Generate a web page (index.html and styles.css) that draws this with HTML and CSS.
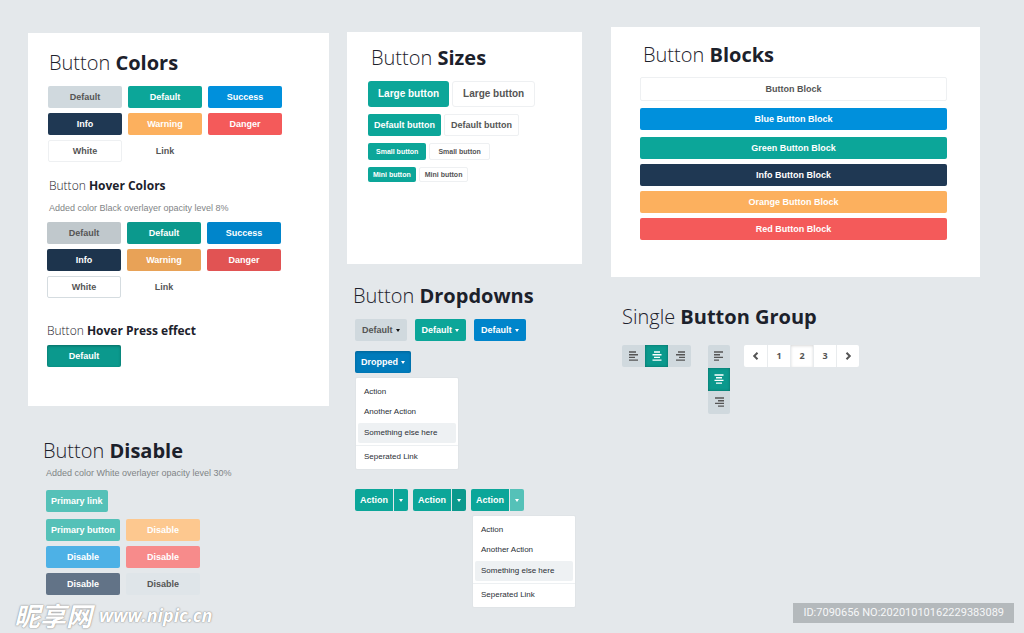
FILE: index.html
```html
<!DOCTYPE html>
<html lang="en">
<head>
<meta charset="utf-8">
<title>Buttons</title>
<link rel="stylesheet" href="styles.css">
</head>
<body>
<svg class="sprite" aria-hidden="true">
  <symbol id="left" viewBox="0 0 10 10"><path d="M0 1h7M0 3.7h9M0 6.4h6M0 9.1h9"/></symbol>
  <symbol id="center" viewBox="0 0 10 10"><path d="M2 1h6M.5 3.7h9M2 6.4h6M.5 9.1h9"/></symbol>
  <symbol id="right" viewBox="0 0 10 10"><path d="M3 1h7M1 3.7h9M4 6.4h6M1 9.1h9"/></symbol>
  <symbol id="left-alt" viewBox="0 0 10 10"><path d="M0 1h9M0 3.7h6M0 6.4h9M0 9.1h5"/></symbol>
  <symbol id="center-alt" viewBox="0 0 10 10"><path d="M.5 1h9M2 3.7h6M.5 6.4h9M2 9.1h6"/></symbol>
  <symbol id="right-alt" viewBox="0 0 10 10"><path d="M1 1h9M4 3.7h6M1 6.4h9M4 9.1h6"/></symbol>
  <symbol id="prev" viewBox="0 0 10 10"><path class="chev" d="M6.5 1.7 3.2 5l3.3 3.3"/></symbol>
  <symbol id="next" viewBox="0 0 10 10"><path class="chev" d="M3.5 1.7 6.8 5 3.5 8.3"/></symbol>
</svg>
<main class="page">
  <div class="col col-left">
    <section class="panel colors">
      <h2 class="title">Button <b>Colors</b></h2>
      <div class="swatches">
        <button class="btn default">Default</button>
        <button class="btn green">Default</button>
        <button class="btn blue">Success</button>
        <button class="btn navy">Info</button>
        <button class="btn orange">Warning</button>
        <button class="btn red">Danger</button>
        <button class="btn white">White</button>
        <a class="btn link" href="#">Link</a>
      </div>
      <h3 class="subtitle">Button <b>Hover Colors</b></h3>
      <p class="note">Added color Black overlayer opacity level 8%</p>
      <div class="swatches hovered">
        <button class="btn default-h">Default</button>
        <button class="btn green-h">Default</button>
        <button class="btn blue-h">Success</button>
        <button class="btn navy-h">Info</button>
        <button class="btn orange-h">Warning</button>
        <button class="btn red-h">Danger</button>
        <button class="btn white white-h">White</button>
        <a class="btn link" href="#">Link</a>
      </div>
      <h3 class="subtitle press-title">Button <b>Hover Press effect</b></h3>
      <div class="swatches pressed-row">
        <button class="btn green-h pressed">Default</button>
      </div>
    </section>
    <section class="disabled">
      <h2 class="title">Button <b>Disable</b></h2>
      <p class="note">Added color White overlayer opacity level 30%</p>
      <a class="btn green-d primary-link" href="#">Primary link</a>
      <div class="swatches">
        <button class="btn green-d" disabled>Primary button</button>
        <button class="btn orange-d" disabled>Disable</button>
        <button class="btn blue-d" disabled>Disable</button>
        <button class="btn red-d" disabled>Disable</button>
        <button class="btn navy-d" disabled>Disable</button>
        <button class="btn default-d" disabled>Disable</button>
      </div>
    </section>
  </div>

  <div class="col col-mid">
    <section class="panel sizes">
      <h2 class="title">Button <b>Sizes</b></h2>
      <div class="pair"><button class="btn large green">Large button</button><button class="btn large white">Large button</button></div>
      <div class="pair"><button class="btn green">Default button</button><button class="btn white">Default button</button></div>
      <div class="pair"><button class="btn small green">Small button</button><button class="btn small white">Small button</button></div>
      <div class="pair"><button class="btn mini green">Mini button</button><button class="btn mini white">Mini button</button></div>
    </section>
    <section class="dropdowns">
      <h2 class="title">Button <b>Dropdowns</b></h2>
      <div class="drop-row">
        <button class="btn drop default">Default<span class="caret dark"></span></button>
        <button class="btn drop green">Default<span class="caret"></span></button>
        <button class="btn drop blue-h">Default<span class="caret"></span></button>
      </div>
      <button class="btn drop dropped">Dropped<span class="caret"></span></button>
      <ul class="menu">
        <li><a href="#">Action</a></li>
        <li><a href="#">Another Action</a></li>
        <li><a class="active" href="#">Something else here</a></li>
        <li class="separated"><a href="#">Seperated Link</a></li>
      </ul>
      <div class="split-row">
        <div class="split"><button class="btn green">Action</button><button class="btn toggle green" aria-label="Open"><span class="caret"></span></button></div>
        <div class="split"><button class="btn green">Action</button><button class="btn toggle green-h" aria-label="Open"><span class="caret"></span></button></div>
        <div class="split"><button class="btn green">Action</button><button class="btn toggle green-d" aria-label="Open"><span class="caret"></span></button>
          <ul class="menu floating">
            <li><a href="#">Action</a></li>
            <li><a href="#">Another Action</a></li>
            <li><a class="active" href="#">Something else here</a></li>
            <li class="separated"><a href="#">Seperated Link</a></li>
          </ul>
        </div>
      </div>
    </section>
  </div>

  <div class="col col-right">
    <section class="panel blocks">
      <h2 class="title">Button <b>Blocks</b></h2>
      <div class="stack">
        <button class="btn white spaced">Button Block</button>
        <button class="btn blue spaced">Blue Button Block</button>
        <button class="btn green">Green Button Block</button>
        <button class="btn navy">Info Button Block</button>
        <button class="btn orange">Orange Button Block</button>
        <button class="btn red">Red Button Block</button>
      </div>
    </section>
    <section class="groups">
      <h2 class="title">Single <b>Button Group</b></h2>
      <div class="group-row">
        <div class="group">
          <button class="cell" aria-label="Align left"><svg><use href="#left"/></svg></button>
          <button class="cell on" aria-label="Align center"><svg><use href="#center"/></svg></button>
          <button class="cell" aria-label="Align right"><svg><use href="#right"/></svg></button>
        </div>
        <div class="group vertical">
          <button class="cell" aria-label="Align left"><svg><use href="#left-alt"/></svg></button>
          <button class="cell on" aria-label="Align center"><svg><use href="#center-alt"/></svg></button>
          <button class="cell" aria-label="Align right"><svg><use href="#right-alt"/></svg></button>
        </div>
        <nav class="group pager" aria-label="Pages">
          <button class="cell" aria-label="Previous"><svg><use href="#prev"/></svg></button>
          <button class="cell">1</button>
          <button class="cell current">2</button>
          <button class="cell">3</button>
          <button class="cell" aria-label="Next"><svg><use href="#next"/></svg></button>
        </nav>
      </div>
    </section>
  </div>
</main>
<div class="watermark"><span class="brand">昵享网</span><span class="site">www.nipic.cn</span></div>
<div class="serial">ID:7090656 NO:20201010162229383089</div>
</body>
</html>
```
FILE: styles.css
```css
* { box-sizing: border-box; }
body {
  margin: 0;
  position: relative;
  min-height: 100vh;
  background: #e4e8eb;
  color: #1c212b;
  font-family: "Liberation Sans", Arial, sans-serif;
  font-size: 8px;
}
.sprite { position: absolute; width: 0; height: 0; }
h2, h3, p, ul { margin: 0; padding: 0; }

.page { display: flex; align-items: flex-start; padding: 27px 44px 0 28px; }
.col-left { flex: 301 1 0; margin: 6px 18px 0 0; }
.col-mid { flex: 235 1 0; margin: 5px 29px 0 0; }
.col-right { flex: 369 1 0; }
.panel { background: #fff; }

.title { font: 300 20px/30px "Open Sans", sans-serif; white-space: nowrap; }
.title b { font-weight: 700; }
.subtitle { font: 300 12px/20px "Open Sans", sans-serif; white-space: nowrap; }
.subtitle b { font-weight: 700; }
.note { color: #7f8486; font-size: 9px; line-height: 12px; white-space: nowrap; }

.btn {
  display: inline-flex;
  align-items: center;
  justify-content: center;
  height: 22px;
  padding: 0 6px;
  border: 0;
  border-radius: 2px;
  color: #fff;
  font: 700 9px/12px "Liberation Sans", Arial, sans-serif;
  text-decoration: none;
  white-space: nowrap;
}
.default { background: #d0d9de; color: #555; }
.green { background: #0ca699; }
.blue { background: #0090dc; }
.navy { background: #1f3853; }
.orange { background: #fcb05e; }
.red { background: #f45a5a; }
.white { background: #fff; color: #555; border: 1px solid #eef0f2; }
.link { color: #555; }
.default-h { background: #c0c8cc; color: #555; }
.green-h { background: #0b998d; }
.blue-h { background: #0085cb; }
.navy-h { background: #1d344d; }
.orange-h { background: #e8a257; }
.red-h { background: #e15353; }
.white-h { border-color: #d5dce0; }
.green-d { background: #55c1b8; }
.orange-d { background: #fdc88f; }
.blue-d { background: #4db1e6; }
.red-d { background: #f78b8b; }
.navy-d { background: #627387; }
.default-d { background: #dfe5e9; color: #555; }
.pressed { box-shadow: inset 0 1px 3px rgba(0, 0, 0, .3); }

.swatches { display: grid; grid-template-columns: repeat(3, 74px); gap: 5px 6px; }
.swatches .btn { padding: 0; }

.colors { padding: 15px 20px 39px; }
.colors .title { margin-bottom: 8px; }
.colors .title, .colors .subtitle { padding-left: 1px; }
.colors .subtitle { margin-top: 14px; }
.colors .note { margin: 6px 0 8px; padding-left: 1px; }
.colors .hovered, .colors .pressed-row { margin-left: -1px; }
.colors .press-title { margin: 23px 0 4px -2px; }

.disabled { padding: 30px 0 0 18px; }
.disabled .title { margin-left: -3px; }
.disabled .note { margin: 1px 0 11px; }
.disabled .primary-link { margin-bottom: 7px; padding: 0 5px; }
.disabled .swatches { grid-template-columns: repeat(2, 74px); }

.sizes { min-height: 232px; padding: 11px 21px; }
.sizes .title { padding-left: 3px; margin-bottom: 8px; }
.pair { display: flex; gap: 3px; margin-bottom: 7px; }
.large { height: 26px; padding: 0 10px; font-size: 10px; border-radius: 3px; }
.small { height: 17px; padding: 0 8px; font-size: 7px; }
.mini { height: 15px; padding: 0 5px; font-size: 7px; }

.dropdowns { padding: 17px 0 0 8px; }
.dropdowns .title { margin: 0 0 8px -2px; }
.drop-row { display: flex; gap: 8px; margin-bottom: 10px; }
.drop { padding: 0 7px; }
.dropped { background: #007bbb; box-shadow: inset 0 1px 3px rgba(0, 0, 0, .2); padding: 0 6px; }
.caret { width: 0; border: 2px solid transparent; border-top: 3px solid currentColor; border-bottom: 0; }
.caret.dark { color: #111; }
.drop .caret { margin-left: 3px; }

.menu {
  width: 104px;
  padding: 4px 2px 2px;
  list-style: none;
  background: #fff;
  border: 1px solid #e0e4e7;
  border-radius: 2px;
  line-height: 20px;
}
.menu a { display: block; padding: 0 6px; border-radius: 2px; color: #2b2f36; text-decoration: none; }
.menu .active { margin-top: 1px; background: #eef1f3; }
.menu .separated { margin: 2px -2px 0; padding: 1px 2px 0; border-top: 1px solid #edf0f2; }
.dropdowns > .menu { margin-top: 4px; }

.split-row { display: flex; gap: 5px; margin-top: 19px; }
.split { position: relative; display: flex; gap: 1px; }
.split .btn { padding: 0 5px; border-radius: 2px 0 0 2px; }
.split .toggle { width: 14px; padding: 0; border-radius: 0 2px 2px 0; }
.floating { position: absolute; top: 26px; left: 1px; }

.blocks { padding: 13px 33px 32px 29px; }
.blocks .title { padding-left: 3px; margin-bottom: 7px; }
.stack { display: flex; flex-direction: column; }
.stack .btn { margin-bottom: 5px; }
.stack .white { height: 24px; }
.stack .spaced { margin-bottom: 7px; }

.groups { padding: 25px 0 0 11px; }
.groups .title { margin-bottom: 13px; }
.group-row { display: flex; align-items: flex-start; gap: 17px; }
.group { display: flex; overflow: hidden; border-radius: 2px; }
.vertical { flex-direction: column; }
.cell {
  display: flex;
  align-items: center;
  justify-content: center;
  width: 23px;
  height: 22px;
  padding: 0;
  border: 0;
  background: #d0d9de;
  color: #555;
  font: 700 9px/12px "Open Sans", sans-serif;
}
.vertical .cell { height: 23px; width: 22px; padding-bottom: 1px; }
.cell svg { width: 10px; height: 10px; fill: none; stroke: currentColor; stroke-width: 1.4; }
.chev { stroke-width: 2; }
.on { background: #0b998d; color: #fff; box-shadow: inset 0 0 3px rgba(0, 0, 0, .3); }
.pager { margin-left: -3px; }
.pager .cell { background: #fff; }
.pager .cell + .cell { border-left: 1px solid #e9ecee; }
.pager .current { box-shadow: inset 0 1px 3px rgba(0, 0, 0, .15); }

.watermark {
  position: absolute;
  left: 14px;
  bottom: 4px;
  display: flex;
  align-items: center;
  gap: 7px;
  color: #fff;
  font-style: italic;
  font-weight: 700;
  text-shadow: 0 0 1px #888, 0 0 2px #999;
  white-space: nowrap;
}
.brand { font-family: "Noto Sans CJK SC", sans-serif; font-size: 26px; line-height: 28px; }
.site { font-family: "Open Sans", sans-serif; font-size: 18px; line-height: 24px; }
.serial {
  position: absolute;
  right: 10px;
  bottom: 10px;
  padding: 0 10px;
  background: #b4b9bc;
  color: #f6f7f8;
  font: 400 11px/20px Roboto, sans-serif;
}
```
